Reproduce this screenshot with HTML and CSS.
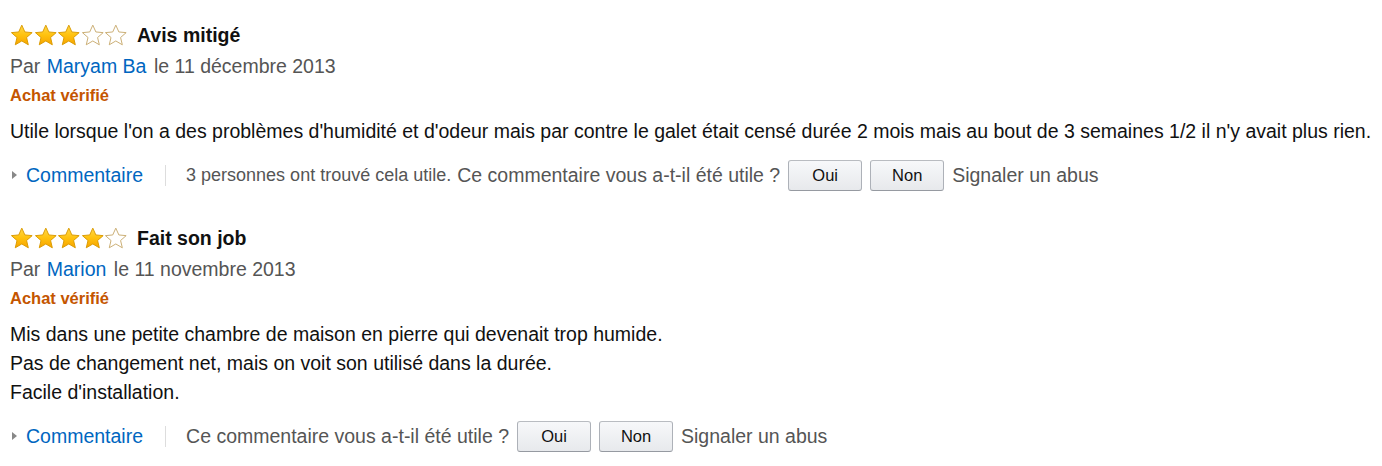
FILE: index.html
```html
<!DOCTYPE html>
<html lang="fr">
<head>
    <meta charset="UTF-8">
    <title>Commentaires</title>
    <link rel="stylesheet" href="styles.css">
</head>
<body>
<svg width="0" height="0" class="defs">
    <defs>
        <linearGradient id="gold" x1="0" y1="0" x2="0" y2="1">
            <stop offset="0" stop-color="#ffd84a"/>
            <stop offset="0.5" stop-color="#ffc20e"/>
            <stop offset="1" stop-color="#f7a400"/>
        </linearGradient>
        <path id="star" d="M12 1.2l3.2 7.1 7.6.7-5.8 5.1 1.8 7.6L12 17.7l-6.8 4 1.8-7.6-5.8-5.1 7.6-.7z"/>
    </defs>
</svg>

<div class="review">
    <div class="head">
        <span class="stars">
            <svg viewBox="0 0 24 24"><use href="#star" class="full"/></svg>
            <svg viewBox="0 0 24 24"><use href="#star" class="full"/></svg>
            <svg viewBox="0 0 24 24"><use href="#star" class="full"/></svg>
            <svg viewBox="0 0 24 24"><use href="#star" class="empty"/></svg>
            <svg viewBox="0 0 24 24"><use href="#star" class="empty"/></svg>
        </span>
        <span class="title">Avis mitigé</span>
    </div>
    <div class="byline">Par <a href="#">Maryam Ba</a> le 11 décembre 2013</div>
    <div class="verified">Achat vérifié</div>
    <div class="text">Utile lorsque l'on a des problèmes d'humidité et d'odeur mais par contre le galet était censé durée 2 mois mais au bout de 3 semaines 1/2 il n'y avait plus rien.</div>
    <div class="actions">
        <a href="#" class="comment"><span class="arrow"></span>Commentaire</a>
        <span class="sep"></span>
        <span class="count">3 personnes ont trouvé cela utile.</span>
        <span class="ask">Ce commentaire vous a-t-il été utile ?</span>
        <button class="btn">Oui</button>
        <button class="btn">Non</button>
        <span class="abuse">Signaler un abus</span>
    </div>
</div>

<div class="review">
    <div class="head">
        <span class="stars">
            <svg viewBox="0 0 24 24"><use href="#star" class="full"/></svg>
            <svg viewBox="0 0 24 24"><use href="#star" class="full"/></svg>
            <svg viewBox="0 0 24 24"><use href="#star" class="full"/></svg>
            <svg viewBox="0 0 24 24"><use href="#star" class="full"/></svg>
            <svg viewBox="0 0 24 24"><use href="#star" class="empty"/></svg>
        </span>
        <span class="title">Fait son job</span>
    </div>
    <div class="byline">Par <a href="#">Marion</a> le 11 novembre 2013</div>
    <div class="verified">Achat vérifié</div>
    <div class="text">Mis dans une petite chambre de maison en pierre qui devenait trop humide.<br>Pas de changement net, mais on voit son utilisé dans la durée.<br>Facile d'installation.</div>
    <div class="actions">
        <a href="#" class="comment"><span class="arrow"></span>Commentaire</a>
        <span class="sep"></span>
        <span class="ask">Ce commentaire vous a-t-il été utile ?</span>
        <button class="btn">Oui</button>
        <button class="btn">Non</button>
        <span class="abuse">Signaler un abus</span>
    </div>
</div>
</body>
</html>
```
FILE: styles.css
```css
body{
    margin: 0;
    padding: 0 10px;
    background: #fff;
    font-family: "Liberation Sans", Arial, sans-serif;
    font-size: 19.5px;
    color: #111;
}
.defs{
    position: absolute;
}
a{
    color: #0066c0;
    text-decoration: none;
}

.review{
    margin-top: 23px;
}
.review + .review{
    margin-top: 35px;
}

.head{
    display: flex;
    align-items: center;
    height: 24px;
}
.stars{
    display: flex;
    width: 118px;
    margin-right: 9px;
}
.stars svg{
    width: 23.6px;
    height: 23px;
}
.stars .full{
    fill: url(#gold);
    stroke: #d99a00;
    stroke-width: 1;
}
.stars .empty{
    fill: #fff;
    stroke: #c9ab70;
    stroke-width: 1;
}
.title{
    font-weight: bold;
}

.byline{
    margin-top: 8px;
    line-height: 22px;
    color: #555;
}
.byline a{
    margin: 0 2px 0 1px;
}

.verified{
    margin-top: 9px;
    line-height: 18px;
    font-size: 16.5px;
    font-weight: bold;
    color: #c45500;
}

.text{
    margin-top: 13px;
    line-height: 29px;
}

.actions{
    display: flex;
    align-items: center;
    height: 32px;
    margin-top: 13px;
    color: #555;
}
.comment{
    display: flex;
    align-items: center;
}
.arrow{
    width: 0;
    height: 0;
    margin: 0 9px 0 2px;
    border-top: 4px solid transparent;
    border-bottom: 4px solid transparent;
    border-left: 5px solid #888;
}
.sep{
    width: 1px;
    height: 21px;
    margin: 0 20px 0 22px;
    background: #ddd;
}
.count{
    font-size: 18px;
    margin-right: 6px;
}
.btn{
    width: 74px;
    height: 31px;
    margin-left: 8px;
    padding: 0;
    border: 1px solid #adb1b8;
    border-top-color: #b9bcc1;
    border-bottom-color: #969aa1;
    border-radius: 3px;
    background: linear-gradient(#f7f8fa, #e7e9ec);
    font-family: inherit;
    font-size: 16.5px;
    color: #111;
}
.abuse{
    margin-left: 8px;
}
```
